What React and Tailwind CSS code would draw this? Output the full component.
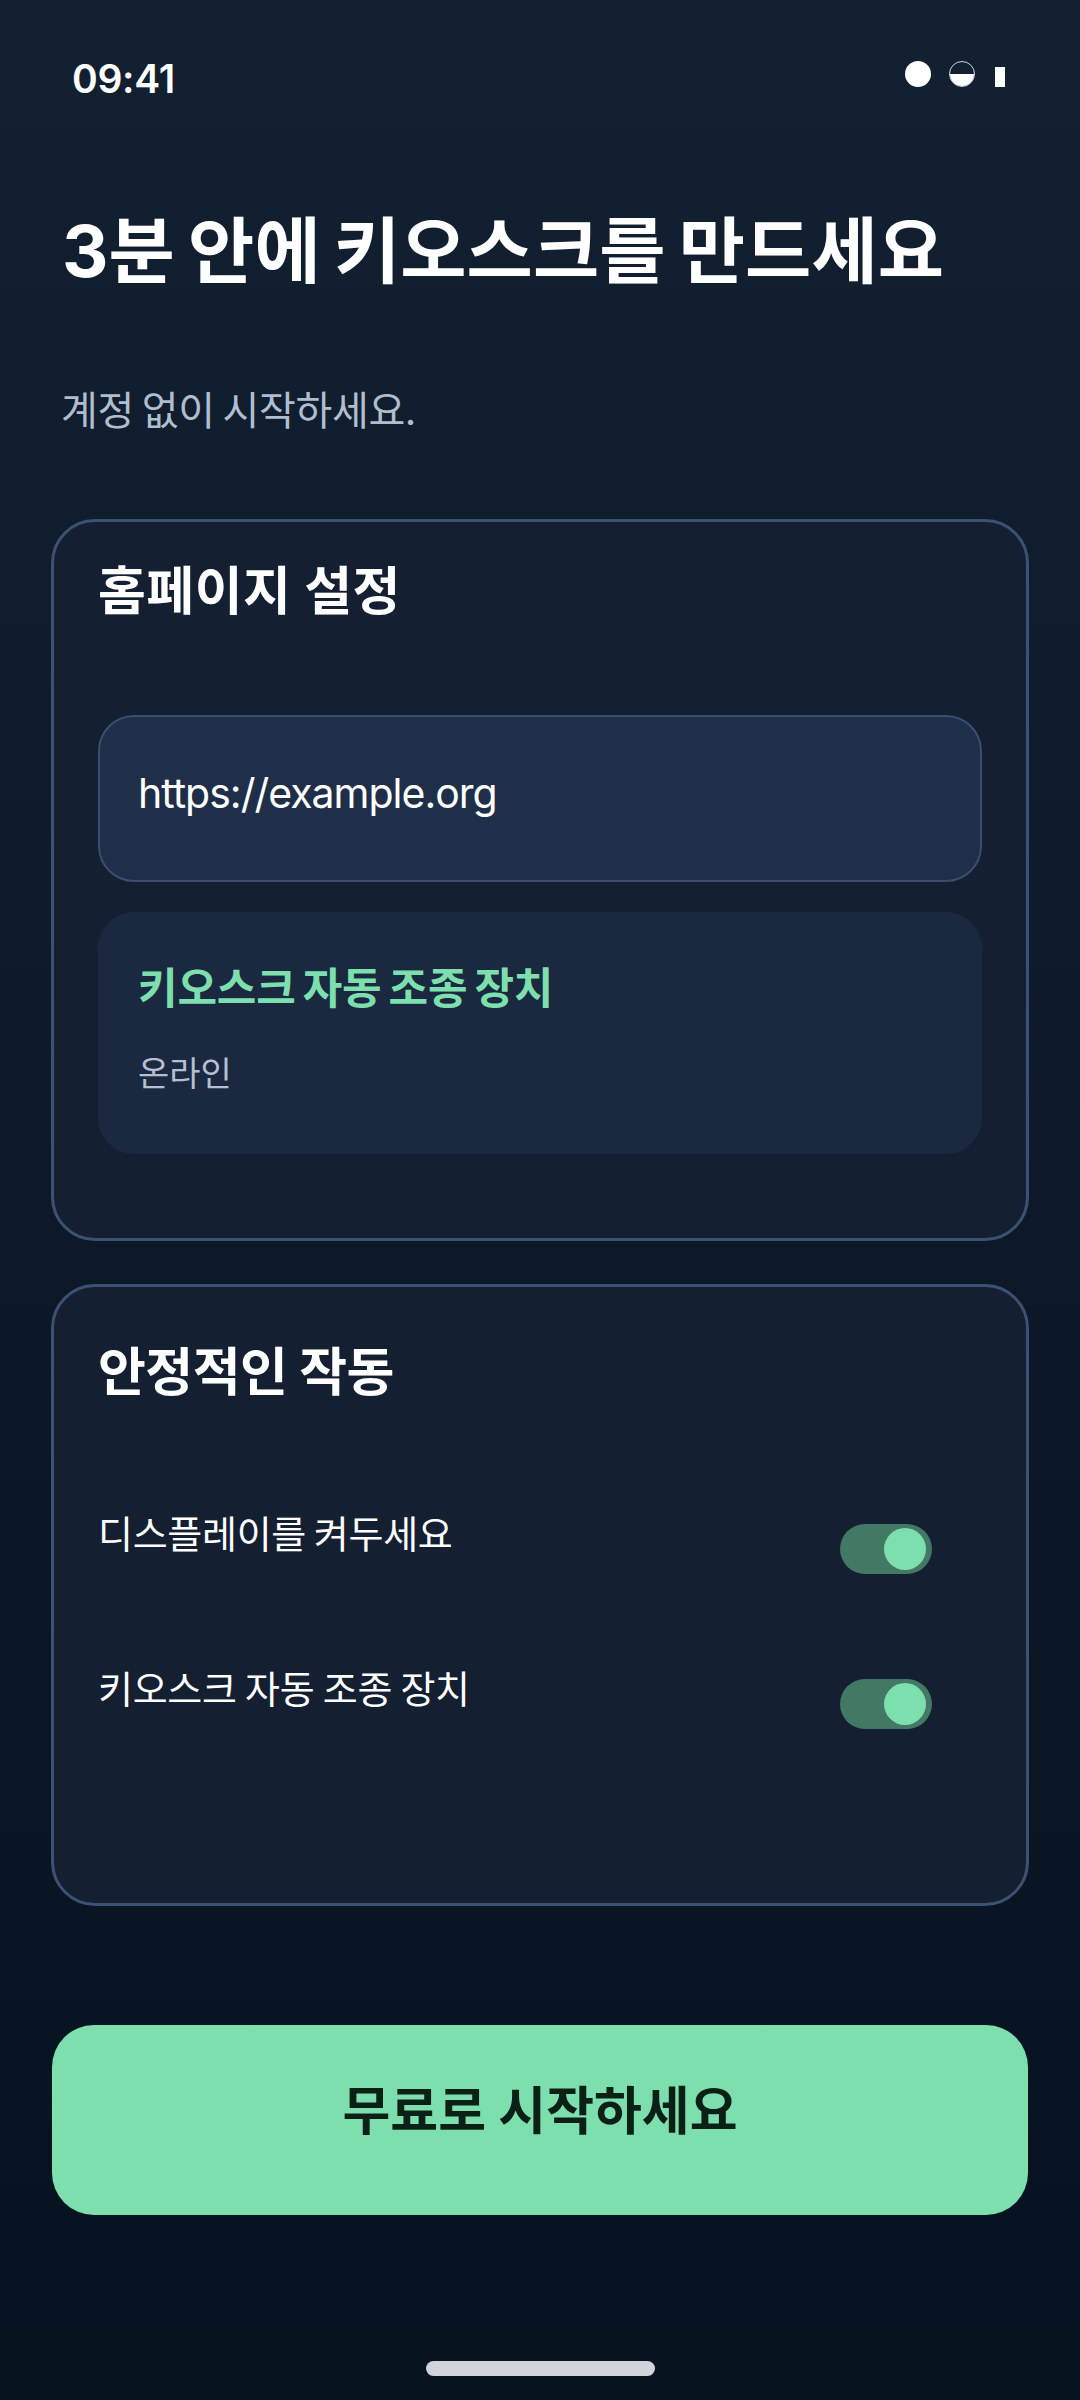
import React from 'react';

const Toggle = ({ className }) => (
  <div className={`flex h-[50px] w-[92px] shrink-0 items-center justify-end rounded-full bg-[#437964] pr-[6px] ${className}`}>
    <div className="h-[42px] w-[42px] rounded-full bg-[#7ddfae]" />
  </div>
);

const App = () => {
  return (
    <div className="flex h-[2400px] w-full flex-col overflow-hidden bg-gradient-to-b from-[#122031] to-[#07121f] px-[52px] [font-family:Inter,'Noto_Sans_CJK_KR',sans-serif] text-white">
      {/* Status bar */}
      <div className="mt-[55px] flex h-[48px] items-start justify-between pl-[20px] pr-[23px]">
        <span className="text-[39px] font-semibold leading-[48px] tracking-[-0.3px]">09:41</span>
        <div className="flex items-end pt-[6px]">
          <div className="h-[26px] w-[26px] rounded-full bg-white" />
          <div className="ml-[18px] flex h-[26px] w-[26px] flex-col justify-end overflow-hidden rounded-full border border-[#cbd5e1]">
            <div className="h-1/2 bg-white" />
          </div>
          <div className="ml-[20px] h-[20px] w-[10px] bg-white" />
        </div>
      </div>

      {/* Heading */}
      <h1 className="mt-[108px] pl-[10px] text-[72px] font-bold leading-[80px] tracking-[0.1px] [word-spacing:-4px]">3분 안에 키오스크를 만드세요</h1>
      <p className="mt-[94px] pl-[9px] text-[40px] leading-[52px] tracking-[-0.35px] [word-spacing:-3px] text-[#b0bdcf]">계정 없이 시작하세요.</p>

      {/* Homepage settings */}
      <section className="-mx-[1px] mt-[82px] h-[722px] rounded-[44px] border-[3px] border-[#3b5275] bg-[#141f31] px-[44px] pt-[38px]">
        <h2 className="text-[52px] font-bold leading-[64px] tracking-[0.5px]">홈페이지 설정</h2>
        <div className="mt-[91px] flex h-[167px] items-center rounded-[36px] border-2 border-[#3a4f70] bg-[#1f2f49] px-[38px] pb-[12px]">
          <span className="text-[41px] leading-[56px] tracking-[-1px]">https://example.org</span>
        </div>
        <div className="mt-[30px] h-[242px] rounded-[36px] bg-[#1a2940] px-[40px] pt-[48px]">
          <div className="text-[43px] font-bold leading-[56px] tracking-[-0.15px] [word-spacing:-3px] text-[#7ddfae]">키오스크 자동 조종 장치</div>
          <div className="mt-[34px] text-[34px] leading-[48px] text-[#b3bfd3]">온라인</div>
        </div>
      </section>

      {/* Stable operation */}
      <section className="-mx-[1px] mt-[43px] h-[622px] rounded-[44px] border-[3px] border-[#3b5275] bg-[#141f31] px-[44px] pt-[54px]">
        <h2 className="text-[52px] font-bold leading-[64px] tracking-[-0.5px]">안정적인 작동</h2>
        <div className="mt-[105px] flex h-[64px] items-start justify-between pr-[50px]">
          <span className="text-[38px] leading-[48px] tracking-[-0.3px] [word-spacing:-2.5px]">디스플레이를 켜두세요</span>
          <Toggle className="mt-[14px]" />
        </div>
        <div className="mt-[91px] flex h-[64px] items-start justify-between pr-[50px]">
          <span className="text-[38px] leading-[48px] tracking-[-0.3px] [word-spacing:-2px]">키오스크 자동 조종 장치</span>
          <Toggle className="mt-[14px]" />
        </div>
      </section>

      <button className="mt-[119px] flex h-[190px] shrink-0 items-center justify-center rounded-[42px] bg-[#7ddfae] pb-[17px] text-[52px] font-bold leading-[64px] text-[#0b2118]">
        무료로 시작하세요
      </button>

      {/* Home indicator */}
      <div className="mt-[146px] h-[15px] w-[229px] shrink-0 self-center rounded-[8px] bg-[#d1d5db]" />
    </div>
  );
};

export default App;
